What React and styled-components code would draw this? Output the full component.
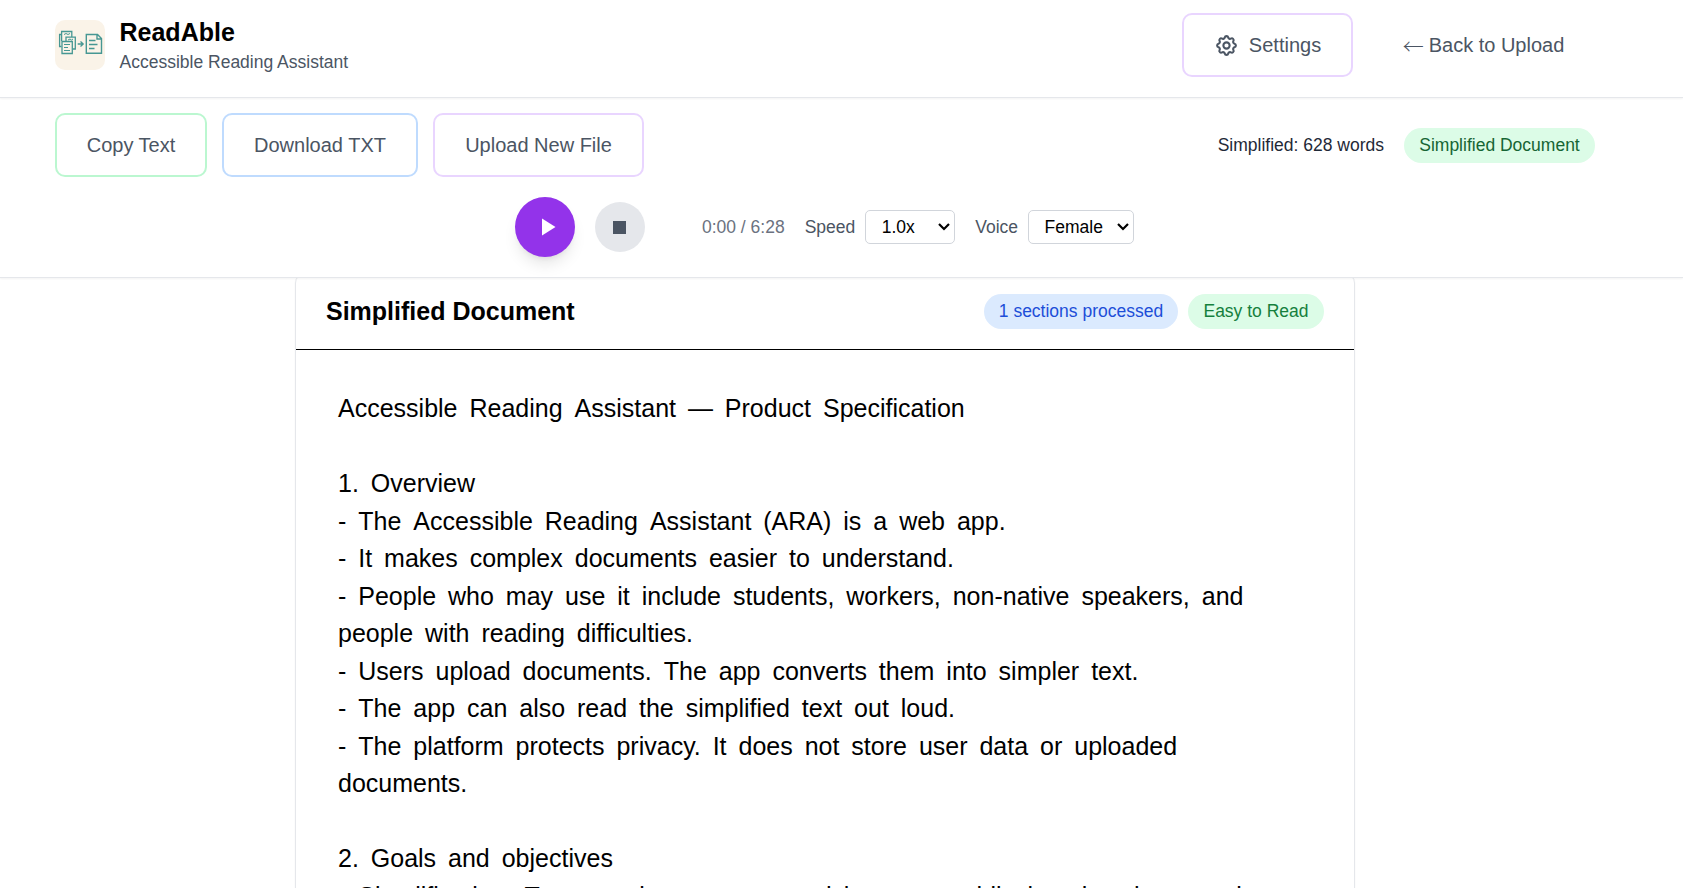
import React from 'react';
import styled, { createGlobalStyle } from 'styled-components';

const Global = createGlobalStyle`
  html { font-size: 20px; }
  *, *::before, *::after { box-sizing: border-box; }
  body {
    margin: 0;
    height: 888px;
    overflow: hidden;
    background: #fff;
    color: #000;
    font-family: "Liberation Sans", Arial, sans-serif;
    line-height: 1.5;
  }
  h1, h2, p { margin: 0; }
`;

const Page = styled.div`
  height: 888px;
  overflow: hidden;
  display: flex;
  flex-direction: column;
`;

const Bar = styled.header`
  flex: none;
  position: relative;
  z-index: ${(p) => p.$level};
  background: #fff;
  border-bottom: 1px solid #e5e7eb;
  box-shadow: 0 1px 2px rgba(0, 0, 0, 0.05);
  padding: 0 88px 0 55px;
`;

const TopRow = styled.div`
  height: 97px;
  padding-bottom: 7px;
  display: flex;
  align-items: center;
  justify-content: space-between;
`;

const Brand = styled.div`
  display: flex;
  align-items: center;
  gap: 14.5px;
`;

const Logo = styled.svg`
  display: block;
  width: 50px;
  height: 50px;
  border-radius: 10px;
`;

const BrandName = styled.h1`
  font-size: 25px;
  line-height: 31px;
`;

const Tagline = styled.p`
  font-size: 17.5px;
  line-height: 25px;
  padding-top: 2px;
  margin-bottom: -2px;
  color: #4b5563;
`;

const Actions = styled.div`
  display: flex;
  align-items: center;
  gap: ${(p) => p.$gap || 15}px;
`;

const Button = styled.button`
  display: inline-flex;
  align-items: center;
  justify-content: center;
  gap: ${(p) => p.$gap || 10}px;
  height: 64px;
  width: ${(p) => p.$width}px;
  padding: 0;
  border: 2px solid ${(p) => p.$border || 'transparent'};
  border-radius: 10px;
  background: transparent;
  color: #4b5563;
  font: inherit;
  font-size: 20px;
  white-space: nowrap;
`;

const Arrow = styled.span`
  font-family: "Noto Sans CJK SC", sans-serif;
  font-size: 21px;
  font-weight: 300;
  line-height: 24px;
`;

const ToolRow = styled.div`
  display: flex;
  align-items: center;
  justify-content: space-between;
  padding-top: 15px;
`;

const WordCount = styled.span`
  font-size: 17.5px;
  color: #1f2937;
`;

const tones = {
  green: ['#dcfce7', '#166534'],
  mint: ['#dcfce7', '#15803d'],
  blue: ['#dbeafe', '#1d4ed8'],
};

const Pill = styled.span`
  width: ${(p) => p.$width}px;
  padding: 5px 0;
  text-align: center;
  border-radius: 999px;
  font-size: 17.5px;
  line-height: 25px;
  white-space: nowrap;
  background: ${(p) => tones[p.$tone][0]};
  color: ${(p) => tones[p.$tone][1]};
`;

const Player = styled.div`
  display: flex;
  align-items: center;
  justify-content: center;
  padding: 20px 1px 20px 0;
  font-size: 17.5px;
  color: #4b5563;
`;

const RoundButton = styled.button`
  display: flex;
  align-items: center;
  justify-content: center;
  flex: none;
  padding: 0;
  border: 0;
  border-radius: 50%;
  width: ${(p) => p.$size}px;
  height: ${(p) => p.$size}px;
  margin-right: ${(p) => p.$after}px;
  background: ${(p) => (p.$primary ? '#9333ea' : '#e5e7eb')};
  box-shadow: ${(p) =>
    p.$primary ? '0 10px 15px -3px rgba(0,0,0,.1), 0 4px 6px -4px rgba(0,0,0,.1)' : 'none'};
`;

const Time = styled.span`
  color: #6b7280;
  margin-right: 20px;
`;

const Field = styled.label`
  display: flex;
  align-items: center;
  gap: 10px;
  & + & { margin-left: 20px; }
`;

const SelectBox = styled.span`
  display: grid;
  align-items: center;
  width: ${(p) => p.$width}px;
  & > * { grid-area: 1 / 1; }
  & > svg { justify-self: end; margin-right: 4px; pointer-events: none; }
`;

const Select = styled.select`
  appearance: none;
  width: 100%;
  height: 34px;
  padding: 0 0 0 15.5px;
  border: 1px solid #d1d5db;
  border-radius: 5px;
  background: #fff;
  color: #000;
  font: inherit;
`;

const Card = styled.main`
  flex: none;
  width: 1060px;
  height: 700px;
  margin: -5px 0 0 295px;
  border: 1px solid #e5e7eb;
  border-radius: 10px;
  box-shadow: 0 1px 2px rgba(0, 0, 0, 0.05);
`;

const CardHead = styled.div`
  display: flex;
  align-items: center;
  justify-content: space-between;
  height: 76px;
  padding: 0 30px;
  border-bottom: 1px solid #000;
`;

const CardTitle = styled.h2`
  font-size: 25px;
  line-height: 35px;
`;

const Reading = styled.div`
  padding: 40px 42px;
  font-size: 25px;
  line-height: 37.5px;
  word-spacing: 5px;
  white-space: pre;
`;

/* A space in a run of its own, so it is not kerned with the capital after it. */
const Gap = styled.span`
  word-spacing: 5.02px;
`;

const TEXT = `Accessible Reading Assistant — Product Specification

1. Overview
- The Accessible Reading Assistant (ARA) is a web app.
- It makes complex documents easier to understand.
- People who may use it include students, workers, non-native speakers, and
people with reading difficulties.
- Users upload documents. The app converts them into simpler text.
- The app can also read the simplified text out loud.
- The platform protects privacy. It does not store user data or uploaded
documents.

2. Goals and objectives
- Simplification: Turn text into easy-to-read language while keeping the meaning`;

const spaced = TEXT.split(/ (?=[AT])/).map((part, i) => (
  <React.Fragment key={i}>
    {i > 0 && <Gap> </Gap>}
    {part}
  </React.Fragment>
));

const LogoArt = () => (
  <Logo viewBox="0 0 50 50" fill="none" stroke="#469793" strokeWidth="1.3">
    <rect width="50" height="50" fill="#faf3e8" stroke="none" />
    <path d="M6.500 26.500H4.600V14.500H6.500M6.600 21V11.500h10.200V17M11 21.500V17.200h9.300v11.800H17.500" />
    <path d="M9 14.500l2-1 2 1 2-1M13 20l2-1 1.500 1 1.500-1" strokeWidth="1" />
    <path d="M7 21.500h10.300v12H7z" />
    <path d="M9 24.500h6M9 27.500h4M9 30.500h6" strokeWidth="1" />
    <path d="M22.700 24h5.300M25.500 21.500l2.700 2.500-2.700 2.500" strokeWidth="1.3" />
    <path d="M31.300 14.500h11.200l4 4V33.300H31.300zM42 14.500v4.500H46.500" strokeWidth="1.4" />
    <path d="M34 20.500h6.500M34 24.500h8.500M34 28.500h5.500" />
  </Logo>
);

const Gear = () => (
  <svg width="25" height="25" viewBox="0 0 24 24" fill="none" stroke="#4b5563" strokeWidth="2" strokeLinecap="round" strokeLinejoin="round">
    <path d="M10.325 4.317c.426-1.756 2.924-1.756 3.350 0a1.724 1.724 0 002.573 1.066c1.543-.94 3.310.826 2.370 2.370a1.724 1.724 0 001.065 2.572c1.756.426 1.756 2.924 0 3.350a1.724 1.724 0 00-1.066 2.573c.94 1.543-.826 3.310-2.370 2.370a1.724 1.724 0 00-2.572 1.065c-.426 1.756-2.924 1.756-3.350 0a1.724 1.724 0 00-2.573-1.066c-1.543.94-3.310-.826-2.370-2.370a1.724 1.724 0 00-1.065-2.572c-1.756-.426-1.756-2.924 0-3.350a1.724 1.724 0 001.066-2.573c-.94-1.543.826-3.310 2.370-2.370.996.608 2.296.070 2.572-1.065z" />
    <circle cx="12" cy="12" r="3" />
  </svg>
);

const Picker = ({ label, value, width }) => (
  <Field>
    {label}
    <SelectBox $width={width}>
      <Select defaultValue={value}><option>{value}</option></Select>
      <svg width="14" height="10" viewBox="0 0 14 10" fill="none" stroke="#000" strokeWidth="2.200">
        <path d="M2 2l5 5 5-5" />
      </svg>
    </SelectBox>
  </Field>
);

export default function App() {
  return (
    <Page>
      <Global />
      <Bar $level={3}>
        <TopRow>
          <Brand>
            <LogoArt />
            <div>
              <BrandName>ReadAble</BrandName>
              <Tagline>Accessible Reading Assistant</Tagline>
            </div>
          </Brand>
          <Actions $gap={19}>
            <Button $border="#e9d5ff" $width={171}><Gear />Settings</Button>
            <Button $width={223} $gap={5}><Arrow>←</Arrow>Back to Upload</Button>
          </Actions>
        </TopRow>
      </Bar>
      <Bar $level={2} as="section">
        <ToolRow>
          <Actions>
            <Button $border="#bbf7d0" $width={152}>Copy Text</Button>
            <Button $border="#bfdbfe" $width={196}>Download TXT</Button>
            <Button $border="#e9d5ff" $width={211}>Upload New File</Button>
          </Actions>
          <Actions $gap={20}>
            <WordCount>Simplified: 628 words</WordCount>
            <Pill $tone="green" $width={191}>Simplified Document</Pill>
          </Actions>
        </ToolRow>
        <Player>
          <RoundButton $primary $size={60} $after={20} aria-label="Play">
            <svg width="30" height="30" viewBox="0 0 30 30"><path d="M12 6.500v17l13.500-8.500z" fill="#fff" /></svg>
          </RoundButton>
          <RoundButton $size={50} $after={57} aria-label="Stop">
            <svg width="26" height="26" viewBox="0 0 26 26"><path d="M6 7h13v13H6z" fill="#4b5563" /></svg>
          </RoundButton>
          <Time>0:00 / 6:28</Time>
          <Picker label="Speed" value="1.0x" width={90} />
          <Picker label="Voice" value="Female" width={106} />
        </Player>
      </Bar>
      <Card>
        <CardHead>
          <CardTitle>Simplified Document</CardTitle>
          <Actions $gap={10}>
            <Pill $tone="blue" $width={194}>1 sections processed</Pill>
            <Pill $tone="mint" $width={136}>Easy to Read</Pill>
          </Actions>
        </CardHead>
        <Reading>{spaced}</Reading>
      </Card>
    </Page>
  );
}
